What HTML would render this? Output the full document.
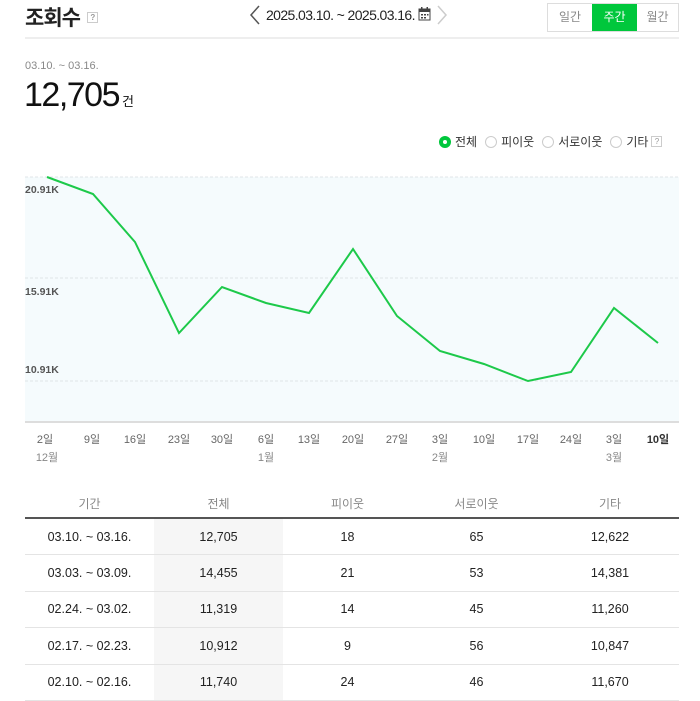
<!DOCTYPE html>
<html><head><meta charset="utf-8">
<style>
*{margin:0;padding:0;box-sizing:border-box}
body{width:700px;height:700px;overflow:hidden;background:#fff;font-family:"Liberation Sans","Noto Sans CJK KR",sans-serif;color:#222;position:relative}
.a{position:absolute;white-space:nowrap}
.q{display:inline-block;width:11px;height:11px;border:1px solid #ccc;font-size:8px;color:#999;text-align:center;line-height:9px;vertical-align:middle}
table{position:absolute;left:25px;top:490px;width:654px;border-collapse:collapse;font-size:12.5px}
th{font-weight:normal;color:#888;height:28px;border-bottom:2px solid #555;font-size:12px}
td{text-align:center;height:36.5px;border-bottom:1px solid #e4e4e4;color:#222}
td:nth-child(2){background:#f6f6f6}
</style></head><body>
<div class="a" style="left:25px;top:2px;font-size:21px;font-weight:bold;letter-spacing:-1px">조회수 <span class="q" style="margin-left:2px;margin-top:-4px">?</span></div>
<svg class="a" style="left:249px;top:5px" width="12" height="20" viewBox="0 0 12 20"><polyline points="10,1 2,10 10,19" fill="none" stroke="#555" stroke-width="1.5"/></svg>
<div class="a" style="left:266px;top:7px;font-size:14px;color:#222;letter-spacing:-0.6px">2025.03.10. ~ 2025.03.16.</div>
<svg class="a" style="left:418px;top:7px" width="13" height="14" viewBox="0 0 13 14"><rect x="1" y="2" width="11" height="11" fill="none" stroke="#444"/><rect x="1" y="2" width="11" height="3" fill="#444"/><rect x="3" y="0" width="1.5" height="3" fill="#444"/><rect x="8.5" y="0" width="1.5" height="3" fill="#444"/><g fill="#444"><rect x="3" y="7" width="2" height="1.5"/><rect x="6" y="7" width="2" height="1.5"/><rect x="9" y="7" width="1.5" height="1.5"/><rect x="3" y="10" width="2" height="1.5"/><rect x="6" y="10" width="2" height="1.5"/></g></svg>
<svg class="a" style="left:436px;top:5px" width="12" height="20" viewBox="0 0 12 20"><polyline points="2,1 10,10 2,19" fill="none" stroke="#ccc" stroke-width="1.5"/></svg>
<div class="a" style="left:547px;top:3px;width:132px;height:29px;border:1px solid #ddd;display:flex;font-size:12px">
<div style="width:44px;text-align:center;line-height:27px;color:#888">일간</div>
<div style="width:45px;text-align:center;line-height:27px;background:#00c73c;color:#fff">주간</div>
<div style="flex:1;text-align:center;line-height:27px;color:#888">월간</div></div>
<div class="a" style="left:25px;top:37px;width:654px;height:2px;background:#eee"></div>
<div class="a" style="left:25px;top:60px;font-size:11px;color:#888">03.10. ~ 03.16.</div>
<div class="a" style="left:24px;top:76px;font-size:34px;color:#111;letter-spacing:-1.5px">12,705<span style="font-size:13px;letter-spacing:0;margin-left:3px">건</span></div>
<div class="a" style="left:439px;top:133px;font-size:12px;color:#333;display:flex;align-items:center">
<span style="width:12px;height:12px;border-radius:50%;background:#00c73c;display:inline-block;position:relative;margin-right:4px"><span style="position:absolute;left:4px;top:4px;width:4px;height:4px;border-radius:50%;background:#fff"></span></span>전체
<span style="width:12px;height:12px;border-radius:50%;border:1px solid #ccc;display:inline-block;margin:0 4px 0 8px"></span>피이웃
<span style="width:12px;height:12px;border-radius:50%;border:1px solid #ccc;display:inline-block;margin:0 4px 0 8px"></span>서로이웃
<span style="width:12px;height:12px;border-radius:50%;border:1px solid #ccc;display:inline-block;margin:0 4px 0 8px"></span>기타 <span class="q" style="margin-left:3px">?</span></div>
<svg class="a" style="left:0;top:0" width="700" height="480">
<rect x="25" y="177" width="654" height="245" fill="#f5fbfd"/>
<g stroke="#e0e6e8" stroke-dasharray="3,2"><line x1="25" y1="177" x2="679" y2="177"/><line x1="25" y1="278" x2="679" y2="278"/><line x1="25" y1="381" x2="679" y2="381"/></g>
<line x1="25" y1="422" x2="679" y2="422" stroke="#ddd" stroke-width="2"/>
<g font-size="10.5" fill="#555" font-weight="bold"><text x="25" y="193">20.91K</text><text x="25" y="295">15.91K</text><text x="25" y="373">10.91K</text></g>
<polyline fill="none" stroke="#1dc94a" stroke-width="2" points="47,177 93,194 135,242 179,333 222,287 266,303 309,313 353,249 397,316 440,351 484,364 528,381 571,372 614,308 658,343"/>
<g font-size="11" fill="#666" text-anchor="middle"><text x="45" y="443">2일</text><text x="92" y="443">9일</text><text x="135" y="443">16일</text><text x="179" y="443">23일</text><text x="222" y="443">30일</text><text x="266" y="443">6일</text><text x="309" y="443">13일</text><text x="353" y="443">20일</text><text x="397" y="443">27일</text><text x="440" y="443">3일</text><text x="484" y="443">10일</text><text x="528" y="443">17일</text><text x="571" y="443">24일</text><text x="614" y="443">3일</text><text x="658" y="443" font-weight="bold" fill="#333">10일</text>
<text x="47" y="461" fill="#888">12월</text><text x="266" y="461" fill="#888">1월</text><text x="440" y="461" fill="#888">2월</text><text x="614" y="461" fill="#888">3월</text></g>
</svg>
<table>
<colgroup><col style="width:129px"><col style="width:129px"><col style="width:129px"><col style="width:129px"><col></colgroup>
<tr><th>기간</th><th>전체</th><th>피이웃</th><th>서로이웃</th><th>기타</th></tr>
<tr><td>03.10. ~ 03.16.</td><td>12,705</td><td>18</td><td>65</td><td>12,622</td></tr>
<tr><td>03.03. ~ 03.09.</td><td>14,455</td><td>21</td><td>53</td><td>14,381</td></tr>
<tr><td>02.24. ~ 03.02.</td><td>11,319</td><td>14</td><td>45</td><td>11,260</td></tr>
<tr><td>02.17. ~ 02.23.</td><td>10,912</td><td>9</td><td>56</td><td>10,847</td></tr>
<tr><td>02.10. ~ 02.16.</td><td>11,740</td><td>24</td><td>46</td><td>11,670</td></tr>
</table>
</body></html>
